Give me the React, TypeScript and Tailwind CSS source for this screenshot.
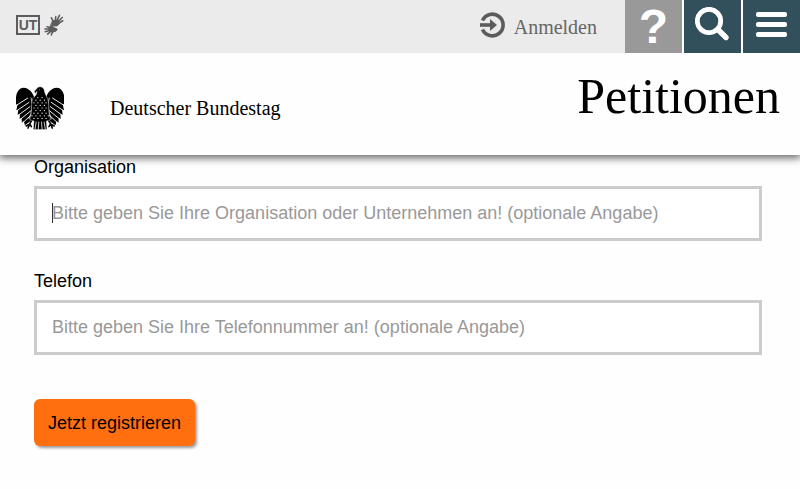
const dots = [
  [62, [112, 125]],
  [70, [106, 119, 132]],
  [78, [100, 112, 125, 137]],
  [86, [106, 119, 132]],
  [94, [100, 112, 125, 137]],
  [102, [106, 119, 132]],
  [110, [100, 112, 125, 137]],
  [118, [94, 106, 119, 132, 144]],
  [126, [100, 112, 125, 137]],
] as [number, number[]][];

const fields = [
  {
    id: "organisation",
    label: "Organisation",
    placeholder:
      "Bitte geben Sie Ihre Organisation oder Unternehmen an! (optionale Angabe)",
    caret: true,
  },
  {
    id: "telefon",
    label: "Telefon",
    placeholder: "Bitte geben Sie Ihre Telefonnummer an! (optionale Angabe)",
    caret: false,
  },
];

const Wing = () => (
  <>
    <path
      fill="#000"
      d="M103 68 C98 48 86 33 68 32 C55 32 46 46 45 62 L45 84 L50 82 L46 101 L52 99 L50 115 L57 112 L56 128 L62 124 L63 139 L69 134 L72 147 L90 134 L100 106 Z"
    />
    <path
      fill="none"
      stroke="#fff"
      strokeWidth="2.8"
      d="M46 86 L82 63 M48 102 L86 76 M52 116 L89 89 M58 129 L91 102 M66 139 L92 115"
    />
    <path fill="none" stroke="#fff" strokeWidth="2.2" d="M91 62 L95 84 L91 110 L84 128" />
    <path
      fill="none"
      stroke="#000"
      strokeWidth="5"
      strokeLinecap="round"
      d="M98 124 L86 144 L76 149 M86 144 L82 155 M87 143 L92 151"
    />
  </>
);

const Eagle = () => (
  <svg
    viewBox="45 28 147 132"
    className="h-11 w-12 shrink-0"
    role="img"
    aria-label="Bundesadler"
  >
    <Wing />
    <g transform="translate(238 0) scale(-1 1)">
      <Wing />
    </g>
    <path
      fill="#000"
      stroke="#fff"
      strokeWidth="1.2"
      d="M101 43 L110 33 C116 26 130 29 132 41 C133 50 138 56 142 66 C149 88 141 102 151 130 L138 134 L140 160 L98 160 L100 134 L87 130 C97 102 89 88 96 66 C103 57 110 53 109 43 L104 50 Z"
    />
    <circle cx="117" cy="38" r="1.4" fill="#fff" />
    {dots.map(([y, xs]) =>
      xs.map((x) => <circle key={`${x}-${y}`} cx={x} cy={y} r="1.9" fill="#fff" />)
    )}
    <path
      stroke="#fff"
      strokeWidth="2.4"
      d="M107 136 L103 160 M115 136 L113 160 M123 136 L125 160 M131 136 L135 160"
    />
  </svg>
);

const SignLanguage = () => (
  <svg
    viewBox="128 34 66 74"
    className="h-6 w-5"
    fill="#5c5c5c"
    stroke="#5c5c5c"
    strokeLinecap="round"
    strokeLinejoin="round"
    aria-hidden="true"
  >
    <path
      strokeWidth="5"
      fill="none"
      d="M160 62 L152 47 M165 58 L167 43 M170 58 L179 39 M174 61 L188 46 M175 66 L190 57"
    />
    <path d="M157 57 L175 54 L179 67 L171 74 L160 74 L149 77 Z" strokeWidth="3" />
    <path
      strokeWidth="5"
      fill="none"
      d="M150 79 L138 77 M146 84 L131 84 M146 89 L132 93 M150 92 L140 101 M156 93 L152 104"
    />
    <path d="M145 80 L156 77 L172 85 L168 91 L156 95 L146 91 Z" strokeWidth="3" />
  </svg>
);

const TopBar = () => (
  <div className="flex h-[53px] items-stretch justify-between bg-[#ebebeb] text-[#5c5c5c]">
    <div className="flex items-center gap-1 pb-1 pl-4">
      <a
        href="#untertitel"
        className="flex h-5 w-6 items-center justify-center border-2 border-[#5c5c5c] text-[14px] leading-4 font-bold"
      >
        UT
      </a>
      <a href="#gebaerdensprache" aria-label="Gebärdensprache">
        <SignLanguage />
      </a>
    </div>
    <div className="flex">
      <a
        href="#anmelden"
        className="mr-7 flex items-center gap-2 font-['Liberation_Serif',serif] text-[20px] leading-6 text-[#666]"
      >
        <svg
          viewBox="0 0 28 28"
          className="mb-1 size-7"
          fill="none"
          stroke="#5c5c5c"
          aria-hidden="true"
        >
          <path strokeWidth="3.6" d="M4.5 9.5 A10.8 10.8 0 1 1 4.5 18.5" />
          <path strokeWidth="3.6" d="M2 14 H13" />
          <path fill="#5c5c5c" stroke="none" d="M12 8 L19 14 L12 20 Z" />
        </svg>
        Anmelden
      </a>
      <div className="flex gap-[2px] bg-white">
        <button
          aria-label="Hilfe"
          className="flex w-[57px] items-center justify-center bg-[#999] text-[48px] leading-[53px] font-bold text-white"
        >
          ?
        </button>
        <button
          aria-label="Suche"
          className="flex w-[57px] items-center justify-center bg-[#324f5c] pb-1"
        >
          <svg viewBox="0 0 36 36" className="size-9" fill="none" stroke="#fff">
            <circle cx="14" cy="14" r="11.7" strokeWidth="4.8" />
            <path strokeWidth="5.4" strokeLinecap="round" d="M23.5 23 L31 30.5" />
          </svg>
        </button>
        <button
          aria-label="Menü"
          className="flex w-[57px] flex-col items-center justify-center gap-[5px] bg-[#324f5c] pb-1"
        >
          <span className="h-[5px] w-[31px] rounded-xs bg-white" />
          <span className="h-[5px] w-[31px] rounded-xs bg-white" />
          <span className="h-[5px] w-[31px] rounded-xs bg-white" />
        </button>
      </div>
    </div>
  </div>
);

const App = () => {
  return (
    <div className="min-h-screen bg-[#fefefe] font-['Liberation_Sans',Arial,sans-serif] text-[18px] leading-6 text-black">
      <header className="sticky top-0 z-10 shadow-[0_2px_8px_1px_rgba(0,0,0,0.6)]">
        <TopBar />
        <div className="flex h-[102px] items-center justify-between bg-[#fefefe] pr-5 pl-4 font-['Liberation_Serif',serif]">
          <a href="#start" className="flex items-center gap-[46px] pt-2 text-[20px]">
            <Eagle />
            <span>Deutscher Bundestag</span>
          </a>
          <h1 className="pb-4 text-[50px] leading-[54px]">Petitionen</h1>
        </div>
      </header>

      <form className="flex flex-col items-start gap-7 pr-[38px] pl-[34px]">
        {fields.map((field) => (
          <div key={field.id} className="flex w-full flex-col gap-[7px]">
            <label htmlFor={field.id}>{field.label}</label>
            <div className="relative">
              <input
                id={field.id}
                type="text"
                placeholder={field.placeholder}
                className="block h-[55px] w-full border-3 border-[#ccc] bg-white px-[15px] outline-none placeholder:text-[#999]"
              />
              {field.caret && (
                <span className="absolute top-[17px] left-[18px] h-5 w-px bg-[#333]" />
              )}
            </div>
          </div>
        ))}
        <button
          type="submit"
          className="mt-4 h-[47px] rounded-md bg-[#ff6f0f] px-[14px] shadow-[2px_2px_3px_rgba(0,0,0,0.4)]"
        >
          Jetzt registrieren
        </button>
      </form>
    </div>
  );
};

export default App;
